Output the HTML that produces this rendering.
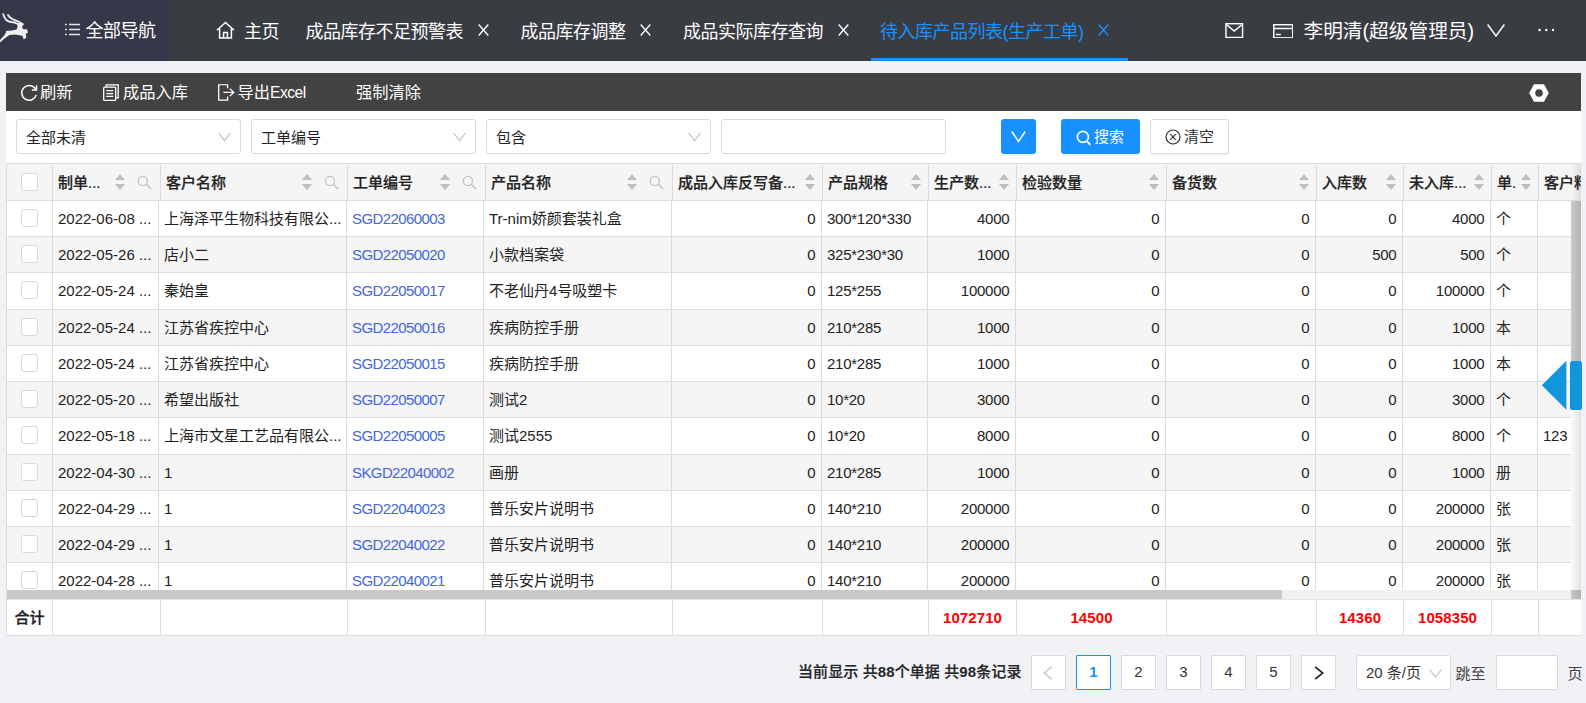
<!DOCTYPE html>
<html lang="zh-CN">
<head>
<meta charset="utf-8">
<title>待入库产品列表(生产工单)</title>
<style>
*{box-sizing:border-box;margin:0;padding:0}
html,body{width:1586px;height:703px;overflow:hidden;background:#f0f2f5}
body{font-family:"Liberation Sans","Noto Sans CJK SC",sans-serif;color:#222;position:relative;font-size:15px}
.abs{position:absolute}
/* ---------- top header ---------- */
#hdr{position:absolute;left:0;top:0;width:1586px;height:60.5px;background:#393d42;color:#fff}
#nav{position:absolute;left:0;top:0;width:169px;height:60.5px;background:#363849}
.ht1{position:absolute;top:1.5px;height:61px;line-height:61px;font-size:18px;letter-spacing:-0.5px;white-space:nowrap;color:#fff}
.ht1.act{color:#1890ff}
.x{position:absolute;top:24px;width:11px;height:12px}
#uline{position:absolute;left:871px;top:58px;width:257px;height:2.5px;background:#1890ff}
/* ---------- panel ---------- */
#panel{position:absolute;left:6px;top:73px;width:1575px;height:562.5px;background:#fff}
#tool{position:absolute;left:0;top:0;width:1575px;height:37.75px;background:#424242;color:#fff}
.tb{position:absolute;top:0;height:38px;line-height:38px;font-size:16.25px;white-space:nowrap;color:#fff}
.sel{position:absolute;top:46px;height:35px;width:225px;border:1px solid #d9d9d9;border-radius:3px;background:#fff;font-size:15px;line-height:35.5px;padding-left:9px;color:#222}
.sel svg{position:absolute;right:9px;top:10px}
.btn{position:absolute;top:46px;height:35px;box-shadow:0 2px 0 rgba(0,0,0,0.04);border-radius:3px;font-size:15px;line-height:33px;white-space:nowrap}
/* ---------- table ---------- */
#tbl{position:absolute;left:0;top:0;width:1586px;height:703px;overflow:hidden;pointer-events:none}
#tleft{position:absolute;left:6px;top:163px;width:1px;height:473px;background:#dcdcdc}
#thead{position:absolute;left:7px;top:163px;width:1574px;height:38px;background:#f5f5f5;border-top:1px solid #dcdcdc;border-bottom:1px solid #dcdcdc;overflow:hidden}
.h{position:absolute;top:1px;height:35px;line-height:35px;border-right:1px solid #dcdcdc;font-weight:500;-webkit-text-stroke:0.22px #222;font-size:15px;color:#222;white-space:nowrap;overflow:hidden}
.h .ht{position:absolute;left:5px;top:0}
.h .si{position:absolute;top:9px;width:12px;height:16px}
.h .mi{position:absolute;right:8px;top:9.5px;width:15px;height:15px}
.h svg{display:block}
.cb{position:absolute;left:14px;top:8px;width:17px;height:18px;border:1px solid #d9d9d9;border-radius:3px;background:#fff}
.h .cb{top:8px}
#tbody{position:absolute;left:7px;top:201px;width:1564px;height:389px;overflow:hidden;background:#fff}
.row{position:absolute;left:0;width:1600px;background:#fff;border-bottom:1px solid #dcdcdc}
.row.odd{background:#f5f5f5}
.c{position:absolute;top:0;height:100%;line-height:35px;border-right:1px solid #dcdcdc;padding:0 5px;font-size:15px;white-space:nowrap;overflow:hidden;color:#222}
.c.r{text-align:right;padding-right:5.6px}
.c.n{letter-spacing:-0.25px}
.c.lk{color:#4466dd;letter-spacing:-0.6px}
#vsb{position:absolute;left:1571px;top:201px;width:10px;height:389px;background:linear-gradient(to right,#fbfbfb,#e2e2e2)}
#vth{position:absolute;left:0;top:0;width:10px;height:160px;background:linear-gradient(to right,#cbcbcb,#b4b4b4)}
#hsb{position:absolute;left:7px;top:590px;width:1574px;height:9px;background:#f1f1f1}
#hth{position:absolute;left:0;top:0;width:1275px;height:9px;background:#c9c9c9}
#corner{position:absolute;left:1564px;top:0;width:10px;height:9px;background:linear-gradient(to right,#c9c9c9,#b2b2b2)}
#tfoot{position:absolute;left:7px;top:599px;width:1574px;height:37px;background:#fff;border-top:1px solid #e4e4e4;border-bottom:1px solid #dcdcdc}
.f{position:absolute;top:0;height:35px;line-height:36px;letter-spacing:0.1px;border-right:1px solid #dcdcdc;font-weight:bold;font-size:15px;text-align:center;white-space:nowrap;overflow:hidden;color:#222}
.f.red{color:#ff0000}
.b5{font-weight:500;-webkit-text-stroke:0.22px currentColor}
.f.first{text-align:left;padding-left:7.5px;font-weight:500;-webkit-text-stroke:0.3px #222}
/* ---------- pager ---------- */
.pg{position:absolute;top:655px;width:35px;height:35px;border:1px solid #d9d9d9;border-radius:1px;background:#fff;text-align:center;line-height:32px;font-size:15px;color:#333}
.pg.on{border-color:#1890ff;color:#1890ff;font-weight:bold}
.ptxt{position:absolute;top:655px;height:35px;line-height:34px;font-size:15px;white-space:nowrap;color:#222}
</style>
</head>
<body>
<!-- ================= header ================= -->
<div id="hdr">
  <div id="nav">
    <svg class="abs" style="left:0;top:0" width="32" height="50" viewBox="0 0 32 50">
      <path d="M3.2 14.2 C4.5 18.5 7.5 21.8 11 22 C13.5 22.1 15.5 22.3 17 23.6" fill="none" stroke="#efeff2" stroke-width="1.8" stroke-linecap="round"/>
      <path d="M8 15 C10 18.5 13 19.6 16 20.6 C18.5 21.4 20.5 22.4 22 23.6" fill="none" stroke="#efeff2" stroke-width="1.8" stroke-linecap="round"/>
      <path d="M16.6 23 L21.5 23 L23.8 23.6 L23.6 25.4 L22 25.6 L22.8 29 L27.4 29.4 L27.8 33 L25.6 33.8 L26.4 37.6 L23.8 39.6 L22.4 35.8 L15 34.6 L9.5 35 L4.5 38.6 L0 42.4 L0 40 L3.8 36 L6 32.6 L6 31 L12 30.4 L16.6 29.4 L17.6 26.4 Z" fill="#efeff2"/>
    </svg>
    <svg class="abs" style="left:65px;top:23px" width="15" height="13" viewBox="0 0 15 13">
      <path d="M0 1.5h1.8M0 6.5h1.8M0 11.5h1.8M4 1.5h11M4 6.5h11M4 11.5h11" stroke="#e6e6e8" stroke-width="1.5" fill="none"/>
    </svg>
    <div class="ht1" style="left:85.5px;top:0.5px">全部导航</div>
  </div>
  <svg class="abs" style="left:216px;top:21px" width="19" height="19" viewBox="0 0 19 19">
    <path d="M1 9.2 L9.5 1.5 L18 9.2 M3.6 7.6 V17 H15.4 V7.6 M7.6 17 V11.6 H11.4 V17" stroke="#fff" stroke-width="1.5" fill="none" stroke-linejoin="miter"/>
  </svg>
  <div class="ht1" style="left:244px">主页</div>
  <div class="ht1" style="left:305.5px">成品库存不足预警表</div>
  <svg class="x" style="left:478px" viewBox="0 0 11 12"><path d="M0.7 0.5 L10.3 11.5 M10.3 0.5 L0.7 11.5" stroke="#fff" stroke-width="1.3"/></svg>
  <div class="ht1" style="left:520.5px">成品库存调整</div>
  <svg class="x" style="left:640px" viewBox="0 0 11 12"><path d="M0.7 0.5 L10.3 11.5 M10.3 0.5 L0.7 11.5" stroke="#fff" stroke-width="1.3"/></svg>
  <div class="ht1" style="left:683px">成品实际库存查询</div>
  <svg class="x" style="left:838px" viewBox="0 0 11 12"><path d="M0.7 0.5 L10.3 11.5 M10.3 0.5 L0.7 11.5" stroke="#fff" stroke-width="1.3"/></svg>
  <div class="ht1 act" style="left:880px">待入库产品列表(生产工单)</div>
  <svg class="x" style="left:1098px" viewBox="0 0 11 12"><path d="M0.7 0.5 L10.3 11.5 M10.3 0.5 L0.7 11.5" stroke="#1890ff" stroke-width="1.3"/></svg>
  <div id="uline"></div>
  <svg class="abs" style="left:1225px;top:23px" width="18.5" height="15.2" viewBox="0 0 19 16">
    <rect x="0.75" y="0.75" width="17.5" height="14.5" fill="none" stroke="#fff" stroke-width="1.5"/>
    <path d="M1.5 1.8 L9.5 8.6 L17.5 1.8" fill="none" stroke="#fff" stroke-width="1.5"/>
  </svg>
  <svg class="abs" style="left:1272.5px;top:23.5px" width="20.5" height="14.6" viewBox="0 0 21 15">
    <rect x="0.75" y="0.75" width="19.5" height="13.5" fill="none" stroke="#fff" stroke-width="1.5"/>
    <path d="M1 4.6 H20 M3 10.8 H8" fill="none" stroke="#fff" stroke-width="1.5"/>
  </svg>
  <div class="ht1" style="left:1303.5px;font-size:19.7px;letter-spacing:0;top:1px">李明清(超级管理员)</div>
  <svg class="abs" style="left:1487px;top:24px" width="18" height="13" viewBox="0 0 18 13">
    <path d="M0.6 0.5 L9 12 L17.4 0.5" fill="none" stroke="#fff" stroke-width="1.4"/>
  </svg>
  <svg class="abs" style="left:1538px;top:27.7px" width="17" height="4" viewBox="0 0 17 4">
    <circle cx="1.6" cy="2" r="1.2" fill="#fff"/><circle cx="8.3" cy="2" r="1.2" fill="#fff"/><circle cx="15" cy="2" r="1.2" fill="#fff"/>
  </svg>
</div>

<!-- ================= panel ================= -->
<div id="panel">
  <div id="tool">
    <svg class="abs" style="left:14px;top:10.5px" width="18" height="18" viewBox="0 0 17 17">
      <path d="M14.6 4.6 A7 7 0 1 0 15.4 10.3" fill="none" stroke="#fff" stroke-width="1.4"/>
      <path d="M15.6 1.2 V5.6 H11.2" fill="none" stroke="#fff" stroke-width="1.4"/>
    </svg>
    <div class="tb" style="left:34px">刷新</div>
    <svg class="abs" style="left:97px;top:10.8px" width="16" height="17.2" viewBox="0 0 16 18" preserveAspectRatio="none">
      <path d="M3.2 2.8 V0.8 H15.2 V14.6 H13" fill="none" stroke="#fff" stroke-width="1.3"/>
      <rect x="0.7" y="3.2" width="12" height="14" rx="1" fill="none" stroke="#fff" stroke-width="1.3"/>
      <path d="M3.2 7 H10.2 M3.2 10 H10.2 M3.2 13 H10.2" stroke="#fff" stroke-width="1.3"/>
    </svg>
    <div class="tb" style="left:117px">成品入库</div>
    <svg class="abs" style="left:211.5px;top:11px" width="17" height="16.8" viewBox="0 0 17 18" preserveAspectRatio="none">
      <path d="M9.6 4.6 V0.8 H0.7 V17.2 H9.6 V13.4" fill="none" stroke="#fff" stroke-width="1.3"/>
      <path d="M5.4 9 H15.6 M11.8 5 L15.8 9 L11.8 13" fill="none" stroke="#fff" stroke-width="1.3"/>
    </svg>
    <div class="tb" style="left:231.5px">导出<span style="letter-spacing:-0.5px;font-size:15.6px">Excel</span></div>
    <div class="tb" style="left:350px">强制清除</div>
    <svg class="abs" style="left:1523px;top:10.5px" width="20" height="18" viewBox="0 0 20 18">
      <path d="M5 0.3 H15 L19.8 9 L15 17.7 H5 L0.2 9 Z M10 5.2 A3.8 3.8 0 1 0 10 12.8 A3.8 3.8 0 1 0 10 5.2 Z" fill="#fff" fill-rule="evenodd"/>
    </svg>
  </div>

  <div class="sel" style="left:10px">全部未清<svg width="13" height="13" viewBox="0 0 13 13"><path d="M0.6 3 L6.5 10.6 L12.4 3" fill="none" stroke="#bfbfbf" stroke-width="1.2"/></svg></div>
  <div class="sel" style="left:245px">工单编号<svg width="13" height="13" viewBox="0 0 13 13"><path d="M0.6 3 L6.5 10.6 L12.4 3" fill="none" stroke="#bfbfbf" stroke-width="1.2"/></svg></div>
  <div class="sel" style="left:480px">包含<svg width="13" height="13" viewBox="0 0 13 13"><path d="M0.6 3 L6.5 10.6 L12.4 3" fill="none" stroke="#bfbfbf" stroke-width="1.2"/></svg></div>
  <div class="sel" style="left:715px"></div>
  <div class="btn" style="left:995px;width:35px;background:#1890ff">
    <svg class="abs" style="left:10px;top:11px" width="15" height="13" viewBox="0 0 15 13"><path d="M0.8 1.5 L7.5 11.4 L14.2 1.5" fill="none" stroke="#fff" stroke-width="1.5"/></svg>
  </div>
  <div class="btn" style="left:1055px;width:79px;background:#1890ff;color:#fff">
    <svg class="abs" style="left:15px;top:11px" width="16" height="17" viewBox="0 0 16 17"><circle cx="6.9" cy="6.9" r="5.5" fill="none" stroke="#fff" stroke-width="1.6"/><path d="M11 11.2 L14.2 14.8" stroke="#fff" stroke-width="1.8"/></svg>
    <span class="abs" style="left:33px;top:1.3px">搜索</span>
  </div>
  <div class="btn" style="left:1144px;width:79px;background:#fff;border:1px solid #d9d9d9;color:#333">
    <svg class="abs" style="left:13.8px;top:9px" width="16" height="16" viewBox="0 0 16 16"><circle cx="8" cy="8" r="7" fill="none" stroke="#333" stroke-width="1.2"/><path d="M5.2 5.2 L10.8 10.8 M10.8 5.2 L5.2 10.8" stroke="#333" stroke-width="1.2"/></svg>
    <span class="abs" style="left:33px;top:0.3px">清空</span>
  </div>

</div>
<div id="tbl">
  <div id="tleft"></div>
<div id="thead"><div style="position:absolute;left:1564px;top:0;width:10px;height:36px;background:linear-gradient(to right,#f5f5f5,#dcdcdc)"></div>
<div class="h" style="left:0px;width:46px"><span class="cb"></span></div>
<div class="h" style="left:46px;width:108px"><span class="ht">制单...</span><span class="si" style="right:34px"><svg class="srt" width="12" height="16" viewBox="0 0 12 16"><path d="M6 0 L11.1 6 L0.9 6 Z M6 16 L11.1 10 L0.9 10 Z" fill="#bfbfbf"/></svg></span><span class="mi"><svg class="mag" width="15" height="15" viewBox="0 0 16 16"><circle cx="6.3" cy="6.3" r="4.9" fill="none" stroke="#bfbfbf" stroke-width="1.3"/><path d="M9.8 9.8 L15 15" stroke="#bfbfbf" stroke-width="1.4" fill="none"/></svg></span></div>
<div class="h" style="left:154px;width:187px"><span class="ht">客户名称</span><span class="si" style="right:34px"><svg class="srt" width="12" height="16" viewBox="0 0 12 16"><path d="M6 0 L11.1 6 L0.9 6 Z M6 16 L11.1 10 L0.9 10 Z" fill="#bfbfbf"/></svg></span><span class="mi"><svg class="mag" width="15" height="15" viewBox="0 0 16 16"><circle cx="6.3" cy="6.3" r="4.9" fill="none" stroke="#bfbfbf" stroke-width="1.3"/><path d="M9.8 9.8 L15 15" stroke="#bfbfbf" stroke-width="1.4" fill="none"/></svg></span></div>
<div class="h" style="left:341px;width:138px"><span class="ht">工单编号</span><span class="si" style="right:34px"><svg class="srt" width="12" height="16" viewBox="0 0 12 16"><path d="M6 0 L11.1 6 L0.9 6 Z M6 16 L11.1 10 L0.9 10 Z" fill="#bfbfbf"/></svg></span><span class="mi"><svg class="mag" width="15" height="15" viewBox="0 0 16 16"><circle cx="6.3" cy="6.3" r="4.9" fill="none" stroke="#bfbfbf" stroke-width="1.3"/><path d="M9.8 9.8 L15 15" stroke="#bfbfbf" stroke-width="1.4" fill="none"/></svg></span></div>
<div class="h" style="left:479px;width:187px"><span class="ht">产品名称</span><span class="si" style="right:34px"><svg class="srt" width="12" height="16" viewBox="0 0 12 16"><path d="M6 0 L11.1 6 L0.9 6 Z M6 16 L11.1 10 L0.9 10 Z" fill="#bfbfbf"/></svg></span><span class="mi"><svg class="mag" width="15" height="15" viewBox="0 0 16 16"><circle cx="6.3" cy="6.3" r="4.9" fill="none" stroke="#bfbfbf" stroke-width="1.3"/><path d="M9.8 9.8 L15 15" stroke="#bfbfbf" stroke-width="1.4" fill="none"/></svg></span></div>
<div class="h" style="left:666px;width:150px"><span class="ht">成品入库反写备...</span><span class="si" style="right:6px"><svg class="srt" width="12" height="16" viewBox="0 0 12 16"><path d="M6 0 L11.1 6 L0.9 6 Z M6 16 L11.1 10 L0.9 10 Z" fill="#bfbfbf"/></svg></span></div>
<div class="h" style="left:816px;width:106px"><span class="ht">产品规格</span><span class="si" style="right:6px"><svg class="srt" width="12" height="16" viewBox="0 0 12 16"><path d="M6 0 L11.1 6 L0.9 6 Z M6 16 L11.1 10 L0.9 10 Z" fill="#bfbfbf"/></svg></span></div>
<div class="h" style="left:922px;width:88px"><span class="ht">生产数...</span><span class="si" style="right:6px"><svg class="srt" width="12" height="16" viewBox="0 0 12 16"><path d="M6 0 L11.1 6 L0.9 6 Z M6 16 L11.1 10 L0.9 10 Z" fill="#bfbfbf"/></svg></span></div>
<div class="h" style="left:1010px;width:150px"><span class="ht">检验数量</span><span class="si" style="right:6px"><svg class="srt" width="12" height="16" viewBox="0 0 12 16"><path d="M6 0 L11.1 6 L0.9 6 Z M6 16 L11.1 10 L0.9 10 Z" fill="#bfbfbf"/></svg></span></div>
<div class="h" style="left:1160px;width:150px"><span class="ht">备货数</span><span class="si" style="right:6px"><svg class="srt" width="12" height="16" viewBox="0 0 12 16"><path d="M6 0 L11.1 6 L0.9 6 Z M6 16 L11.1 10 L0.9 10 Z" fill="#bfbfbf"/></svg></span></div>
<div class="h" style="left:1310px;width:87px"><span class="ht">入库数</span><span class="si" style="right:6px"><svg class="srt" width="12" height="16" viewBox="0 0 12 16"><path d="M6 0 L11.1 6 L0.9 6 Z M6 16 L11.1 10 L0.9 10 Z" fill="#bfbfbf"/></svg></span></div>
<div class="h" style="left:1397px;width:88px"><span class="ht">未入库...</span><span class="si" style="right:6px"><svg class="srt" width="12" height="16" viewBox="0 0 12 16"><path d="M6 0 L11.1 6 L0.9 6 Z M6 16 L11.1 10 L0.9 10 Z" fill="#bfbfbf"/></svg></span></div>
<div class="h" style="left:1485px;width:47px"><span class="ht">单.</span><span class="si" style="right:6px"><svg class="srt" width="12" height="16" viewBox="0 0 12 16"><path d="M6 0 L11.1 6 L0.9 6 Z M6 16 L11.1 10 L0.9 10 Z" fill="#bfbfbf"/></svg></span></div>
<div class="h" style="left:1532px;width:62px"><span class="ht">客户料</span></div>
</div>
<div id="tbody">
<div class="row" style="top:0px;height:36px">
<div class="c" style="left:0px;width:46px"><span class="cb"></span></div>
<div class="c" style="left:46px;width:106px">2022-06-08 ...</div>
<div class="c" style="left:152px;width:188px">上海泽平生物科技有限公...</div>
<div class="c n lk" style="left:340px;width:137px">SGD22060003</div>
<div class="c" style="left:477px;width:188px">Tr-nim娇颜套装礼盒</div>
<div class="c r n" style="left:665px;width:150px">0</div>
<div class="c n" style="left:815px;width:106px">300*120*330</div>
<div class="c r n" style="left:921px;width:88px">4000</div>
<div class="c r n" style="left:1009px;width:150px">0</div>
<div class="c r n" style="left:1159px;width:150px">0</div>
<div class="c r n" style="left:1309px;width:87px">0</div>
<div class="c r n" style="left:1396px;width:88px">4000</div>
<div class="c" style="left:1484px;width:47px">个</div>
<div class="c n" style="left:1531px;width:63px"></div>
</div>
<div class="row odd" style="top:36px;height:36px">
<div class="c" style="left:0px;width:46px"><span class="cb"></span></div>
<div class="c" style="left:46px;width:106px">2022-05-26 ...</div>
<div class="c" style="left:152px;width:188px">店小二</div>
<div class="c n lk" style="left:340px;width:137px">SGD22050020</div>
<div class="c" style="left:477px;width:188px">小款档案袋</div>
<div class="c r n" style="left:665px;width:150px">0</div>
<div class="c n" style="left:815px;width:106px">325*230*30</div>
<div class="c r n" style="left:921px;width:88px">1000</div>
<div class="c r n" style="left:1009px;width:150px">0</div>
<div class="c r n" style="left:1159px;width:150px">0</div>
<div class="c r n" style="left:1309px;width:87px">500</div>
<div class="c r n" style="left:1396px;width:88px">500</div>
<div class="c" style="left:1484px;width:47px">个</div>
<div class="c n" style="left:1531px;width:63px"></div>
</div>
<div class="row" style="top:72px;height:37px">
<div class="c" style="left:0px;width:46px"><span class="cb"></span></div>
<div class="c" style="left:46px;width:106px">2022-05-24 ...</div>
<div class="c" style="left:152px;width:188px">秦始皇</div>
<div class="c n lk" style="left:340px;width:137px">SGD22050017</div>
<div class="c" style="left:477px;width:188px">不老仙丹4号吸塑卡</div>
<div class="c r n" style="left:665px;width:150px">0</div>
<div class="c n" style="left:815px;width:106px">125*255</div>
<div class="c r n" style="left:921px;width:88px">100000</div>
<div class="c r n" style="left:1009px;width:150px">0</div>
<div class="c r n" style="left:1159px;width:150px">0</div>
<div class="c r n" style="left:1309px;width:87px">0</div>
<div class="c r n" style="left:1396px;width:88px">100000</div>
<div class="c" style="left:1484px;width:47px">个</div>
<div class="c n" style="left:1531px;width:63px"></div>
</div>
<div class="row odd" style="top:109px;height:36px">
<div class="c" style="left:0px;width:46px"><span class="cb"></span></div>
<div class="c" style="left:46px;width:106px">2022-05-24 ...</div>
<div class="c" style="left:152px;width:188px">江苏省疾控中心</div>
<div class="c n lk" style="left:340px;width:137px">SGD22050016</div>
<div class="c" style="left:477px;width:188px">疾病防控手册</div>
<div class="c r n" style="left:665px;width:150px">0</div>
<div class="c n" style="left:815px;width:106px">210*285</div>
<div class="c r n" style="left:921px;width:88px">1000</div>
<div class="c r n" style="left:1009px;width:150px">0</div>
<div class="c r n" style="left:1159px;width:150px">0</div>
<div class="c r n" style="left:1309px;width:87px">0</div>
<div class="c r n" style="left:1396px;width:88px">1000</div>
<div class="c" style="left:1484px;width:47px">本</div>
<div class="c n" style="left:1531px;width:63px"></div>
</div>
<div class="row" style="top:145px;height:36px">
<div class="c" style="left:0px;width:46px"><span class="cb"></span></div>
<div class="c" style="left:46px;width:106px">2022-05-24 ...</div>
<div class="c" style="left:152px;width:188px">江苏省疾控中心</div>
<div class="c n lk" style="left:340px;width:137px">SGD22050015</div>
<div class="c" style="left:477px;width:188px">疾病防控手册</div>
<div class="c r n" style="left:665px;width:150px">0</div>
<div class="c n" style="left:815px;width:106px">210*285</div>
<div class="c r n" style="left:921px;width:88px">1000</div>
<div class="c r n" style="left:1009px;width:150px">0</div>
<div class="c r n" style="left:1159px;width:150px">0</div>
<div class="c r n" style="left:1309px;width:87px">0</div>
<div class="c r n" style="left:1396px;width:88px">1000</div>
<div class="c" style="left:1484px;width:47px">本</div>
<div class="c n" style="left:1531px;width:63px"></div>
</div>
<div class="row odd" style="top:181px;height:36px">
<div class="c" style="left:0px;width:46px"><span class="cb"></span></div>
<div class="c" style="left:46px;width:106px">2022-05-20 ...</div>
<div class="c" style="left:152px;width:188px">希望出版社</div>
<div class="c n lk" style="left:340px;width:137px">SGD22050007</div>
<div class="c" style="left:477px;width:188px">测试2</div>
<div class="c r n" style="left:665px;width:150px">0</div>
<div class="c n" style="left:815px;width:106px">10*20</div>
<div class="c r n" style="left:921px;width:88px">3000</div>
<div class="c r n" style="left:1009px;width:150px">0</div>
<div class="c r n" style="left:1159px;width:150px">0</div>
<div class="c r n" style="left:1309px;width:87px">0</div>
<div class="c r n" style="left:1396px;width:88px">3000</div>
<div class="c" style="left:1484px;width:47px">个</div>
<div class="c n" style="left:1531px;width:63px"></div>
</div>
<div class="row" style="top:217px;height:37px">
<div class="c" style="left:0px;width:46px"><span class="cb"></span></div>
<div class="c" style="left:46px;width:106px">2022-05-18 ...</div>
<div class="c" style="left:152px;width:188px">上海市文星工艺品有限公...</div>
<div class="c n lk" style="left:340px;width:137px">SGD22050005</div>
<div class="c" style="left:477px;width:188px">测试2555</div>
<div class="c r n" style="left:665px;width:150px">0</div>
<div class="c n" style="left:815px;width:106px">10*20</div>
<div class="c r n" style="left:921px;width:88px">8000</div>
<div class="c r n" style="left:1009px;width:150px">0</div>
<div class="c r n" style="left:1159px;width:150px">0</div>
<div class="c r n" style="left:1309px;width:87px">0</div>
<div class="c r n" style="left:1396px;width:88px">8000</div>
<div class="c" style="left:1484px;width:47px">个</div>
<div class="c n" style="left:1531px;width:63px">123</div>
</div>
<div class="row odd" style="top:254px;height:36px">
<div class="c" style="left:0px;width:46px"><span class="cb"></span></div>
<div class="c" style="left:46px;width:106px">2022-04-30 ...</div>
<div class="c" style="left:152px;width:188px">1</div>
<div class="c n lk" style="left:340px;width:137px">SKGD22040002</div>
<div class="c" style="left:477px;width:188px">画册</div>
<div class="c r n" style="left:665px;width:150px">0</div>
<div class="c n" style="left:815px;width:106px">210*285</div>
<div class="c r n" style="left:921px;width:88px">1000</div>
<div class="c r n" style="left:1009px;width:150px">0</div>
<div class="c r n" style="left:1159px;width:150px">0</div>
<div class="c r n" style="left:1309px;width:87px">0</div>
<div class="c r n" style="left:1396px;width:88px">1000</div>
<div class="c" style="left:1484px;width:47px">册</div>
<div class="c n" style="left:1531px;width:63px"></div>
</div>
<div class="row" style="top:290px;height:36px">
<div class="c" style="left:0px;width:46px"><span class="cb"></span></div>
<div class="c" style="left:46px;width:106px">2022-04-29 ...</div>
<div class="c" style="left:152px;width:188px">1</div>
<div class="c n lk" style="left:340px;width:137px">SGD22040023</div>
<div class="c" style="left:477px;width:188px">普乐安片说明书</div>
<div class="c r n" style="left:665px;width:150px">0</div>
<div class="c n" style="left:815px;width:106px">140*210</div>
<div class="c r n" style="left:921px;width:88px">200000</div>
<div class="c r n" style="left:1009px;width:150px">0</div>
<div class="c r n" style="left:1159px;width:150px">0</div>
<div class="c r n" style="left:1309px;width:87px">0</div>
<div class="c r n" style="left:1396px;width:88px">200000</div>
<div class="c" style="left:1484px;width:47px">张</div>
<div class="c n" style="left:1531px;width:63px"></div>
</div>
<div class="row odd" style="top:326px;height:36px">
<div class="c" style="left:0px;width:46px"><span class="cb"></span></div>
<div class="c" style="left:46px;width:106px">2022-04-29 ...</div>
<div class="c" style="left:152px;width:188px">1</div>
<div class="c n lk" style="left:340px;width:137px">SGD22040022</div>
<div class="c" style="left:477px;width:188px">普乐安片说明书</div>
<div class="c r n" style="left:665px;width:150px">0</div>
<div class="c n" style="left:815px;width:106px">140*210</div>
<div class="c r n" style="left:921px;width:88px">200000</div>
<div class="c r n" style="left:1009px;width:150px">0</div>
<div class="c r n" style="left:1159px;width:150px">0</div>
<div class="c r n" style="left:1309px;width:87px">0</div>
<div class="c r n" style="left:1396px;width:88px">200000</div>
<div class="c" style="left:1484px;width:47px">张</div>
<div class="c n" style="left:1531px;width:63px"></div>
</div>
<div class="row" style="top:362px;height:37px">
<div class="c" style="left:0px;width:46px"><span class="cb"></span></div>
<div class="c" style="left:46px;width:106px">2022-04-28 ...</div>
<div class="c" style="left:152px;width:188px">1</div>
<div class="c n lk" style="left:340px;width:137px">SGD22040021</div>
<div class="c" style="left:477px;width:188px">普乐安片说明书</div>
<div class="c r n" style="left:665px;width:150px">0</div>
<div class="c n" style="left:815px;width:106px">140*210</div>
<div class="c r n" style="left:921px;width:88px">200000</div>
<div class="c r n" style="left:1009px;width:150px">0</div>
<div class="c r n" style="left:1159px;width:150px">0</div>
<div class="c r n" style="left:1309px;width:87px">0</div>
<div class="c r n" style="left:1396px;width:88px">200000</div>
<div class="c" style="left:1484px;width:47px">张</div>
<div class="c n" style="left:1531px;width:63px"></div>
</div>
</div>
  <div id="vsb"><div id="vth"></div></div>
  <div id="hsb"><div id="hth"></div><div id="corner"></div></div>
<div id="tfoot">
<div class="f first" style="left:0px;width:46px">合计</div>
<div class="f" style="left:46px;width:108px"></div>
<div class="f" style="left:154px;width:187px"></div>
<div class="f" style="left:341px;width:138px"></div>
<div class="f" style="left:479px;width:187px"></div>
<div class="f" style="left:666px;width:150px"></div>
<div class="f" style="left:816px;width:106px"></div>
<div class="f red" style="left:922px;width:88px">1072710</div>
<div class="f red" style="left:1010px;width:150px">14500</div>
<div class="f" style="left:1160px;width:150px"></div>
<div class="f red" style="left:1310px;width:87px">14360</div>
<div class="f red" style="left:1397px;width:88px">1058350</div>
<div class="f" style="left:1485px;width:47px"></div>
<div class="f" style="left:1532px;width:62px"></div>
</div>
</div>

<!-- floating handle -->
<svg class="abs" style="left:1541px;top:360px" width="45" height="51" viewBox="0 0 45 51">
  <path d="M0.8 25.3 L25.4 0.8 V49.8 Z" fill="#1296db"/>
  <rect x="29" y="1" width="12" height="49" rx="2.5" fill="#1296db"/>
</svg>

<!-- ================= pager ================= -->
<div class="ptxt" style="left:798px;font-weight:bold;color:#262626;line-height:33px;letter-spacing:0.1px"><span class="b5">当前显示 共</span>88<span class="b5">个单据 共</span>98<span class="b5">条记录</span></div>
<div class="pg" style="left:1031px;color:#c0c0c0"><svg class="abs" style="left:11px;top:10px" width="10" height="14" viewBox="0 0 10 14"><path d="M8.8 0.8 L1.2 7 L8.8 13.2" fill="none" stroke="#c4c4c4" stroke-width="1.2"/></svg></div>
<div class="pg on" style="left:1076px">1</div>
<div class="pg" style="left:1121px">2</div>
<div class="pg" style="left:1166px">3</div>
<div class="pg" style="left:1211px">4</div>
<div class="pg" style="left:1256px">5</div>
<div class="pg" style="left:1301px"><svg class="abs" style="left:12px;top:10px" width="10" height="14" viewBox="0 0 10 14"><path d="M1.2 0.8 L8.8 7 L1.2 13.2" fill="none" stroke="#222" stroke-width="1.7"/></svg></div>
<div class="pg" style="left:1356px;width:95px;text-align:left;padding-left:9px;line-height:33px;border-radius:3px">20 条/页<svg class="abs" style="right:8px;top:11px" width="13" height="13" viewBox="0 0 13 13"><path d="M0.6 2.5 L6.5 10 L12.4 2.5" fill="none" stroke="#bfbfbf" stroke-width="1.2"/></svg></div>
<div class="ptxt" style="left:1455.5px;line-height:37px;color:#444">跳至</div>
<div class="pg" style="left:1496px;width:62px"></div>
<div class="ptxt" style="left:1567.5px;line-height:37px;color:#444">页</div>
</body>
</html>
